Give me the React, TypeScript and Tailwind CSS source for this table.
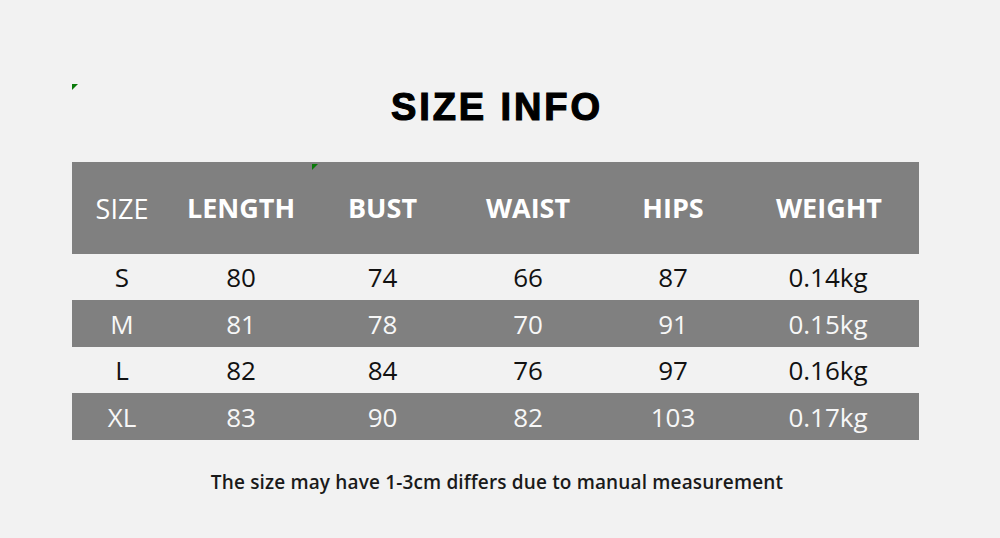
import React from 'react';

const headers = ['SIZE', 'LENGTH', 'BUST', 'WAIST', 'HIPS', 'WEIGHT'];

const rows = [
  ['S', '80', '74', '66', '87', '0.14kg'],
  ['M', '81', '78', '70', '91', '0.15kg'],
  ['L', '82', '84', '76', '97', '0.16kg'],
  ['XL', '83', '90', '82', '103', '0.17kg'],
];

function Flag({ className }: { className: string }) {
  // little excel-style comment marker
  return (
    <div
      className={`absolute w-0 h-0 border-t-[6px] border-t-[#0a7a0a] border-r-[6px] border-r-transparent ${className}`}
    />
  );
}

export default function App() {
  return (
    <div className="relative w-[1000px] h-[538px] bg-[#f2f2f2] font-['Open_Sans','Noto_Sans',sans-serif] overflow-hidden">
      <Flag className="left-[72px] top-[84px]" />

      <div className="flex flex-col pt-[83px]">
        <h1 className="text-center text-[38px] leading-[48px] font-bold tracking-[2.9px] text-black font-['Liberation_Sans',Arial,sans-serif] [-webkit-text-stroke:1.2px_black] pr-[6px]">
          SIZE INFO
        </h1>

        <div className="relative ml-[72px] mt-[31px] w-[847px]">
          <Flag className="left-[240px] top-[2px]" />
          <div className="grid grid-cols-[100px_138px_145px_146px_144px_174px] h-[92px] bg-[#808080] text-white items-center text-[27px]">
            {headers.map((h, i) => (
              <div
                key={h}
                className={`text-center ${i === 0 ? 'font-normal pt-[3px]' : 'font-bold'} ${i === 5 ? 'pr-[6px]' : ''}`}
              >
                {h}
              </div>
            ))}
          </div>

          {rows.map((r, ri) => {
            const dark = ri % 2 === 1;
            return (
              <div
                key={r[0]}
                className={`grid grid-cols-[100px_138px_145px_146px_144px_174px] items-center text-[26px] ${
                  dark ? 'bg-[#808080] text-[#f7f7f7] h-[47px]' : 'text-[#111] h-[46px]'
                }`}
              >
                {r.map((c, ci) => (
                  <div key={ci} className={`text-center leading-none ${ci === 5 ? 'pr-[8px]' : ''}`}>
                    {c}
                  </div>
                ))}
              </div>
            );
          })}
        </div>

        <p className="mt-[28px] text-center text-[19px] font-semibold tracking-[0.15px] text-[#1a1a1a] pr-[6px]">
          The size may have 1-3cm differs due to manual measurement
        </p>
      </div>
    </div>
  );
}
